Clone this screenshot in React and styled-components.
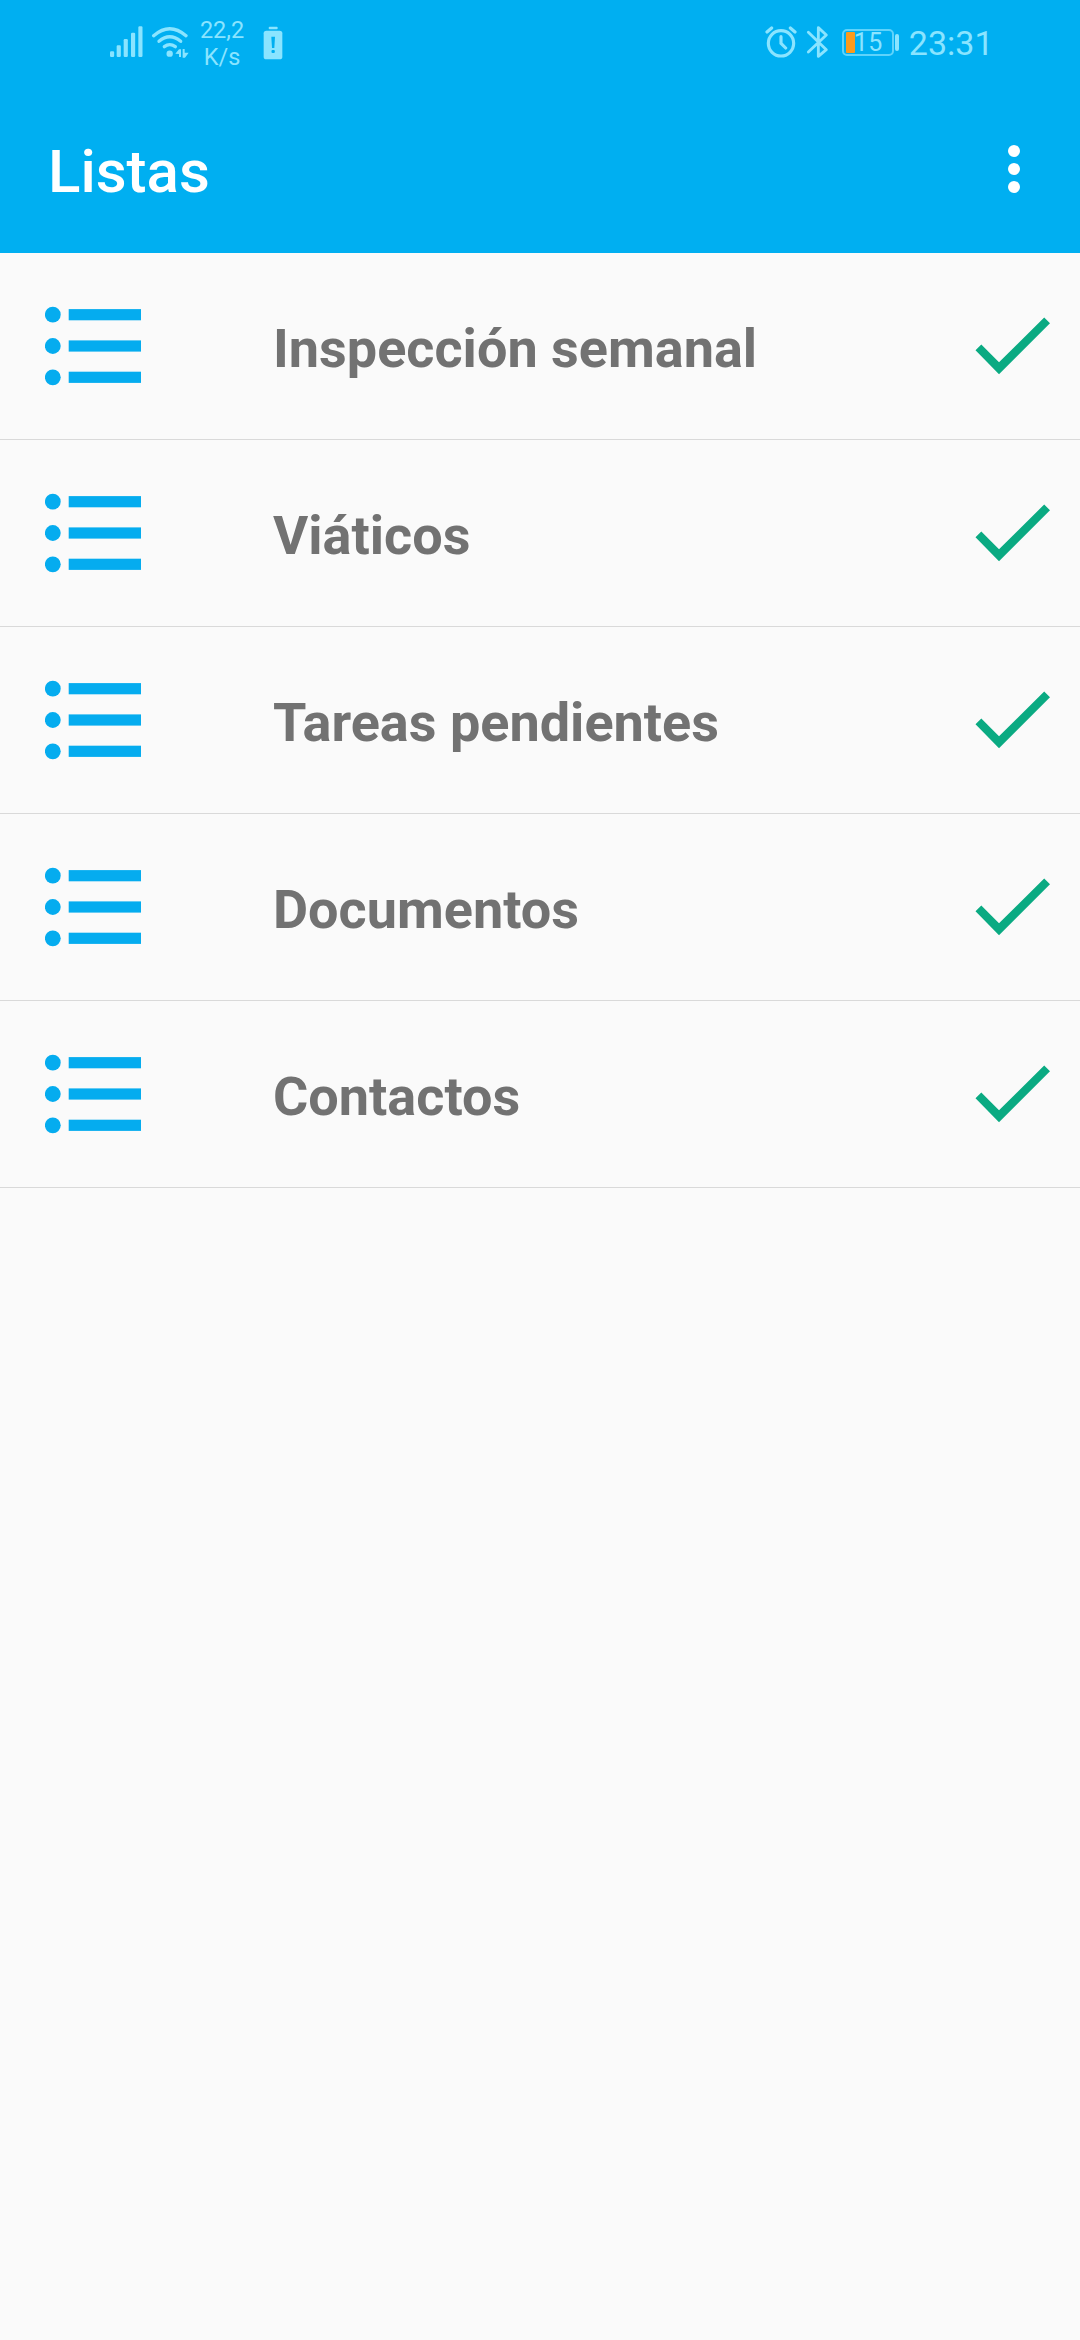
import React from "react";
import styled, { createGlobalStyle } from "styled-components";

const GlobalStyle = createGlobalStyle`
  * { box-sizing: border-box; }
  body { margin: 0; background: #fafafa; font-family: Roboto, "Noto Sans", sans-serif; }
`;

const TINT = "#8ae4ff";

const Screen = styled.main`
  width: 1080px;
  min-height: 2340px;
  background: #fafafa;
`;

const Header = styled.header`
  height: 253px;
  background: #00aff1;
`;

const StatusBar = styled.div`
  display: flex;
  justify-content: space-between;
  height: 85px;
  padding: 0 86.500px 0 109px;
  color: ${TINT};
`;

const StatusGroup = styled.div`
  display: flex;
  align-items: flex-start;
`;

const Glyph = styled.svg`
  display: block;
  flex: none;
  width: ${(p) => p.$w}px;
  height: ${(p) => p.$h}px;
  margin: ${(p) => p.$top || 0}px 0 0 ${(p) => p.$left || 0}px;
`;

const NetSpeed = styled.div`
  width: 50px;
  margin: 17px 0 0 8px;
  font-size: 23.5px;
  line-height: 27px;
  text-align: center;
`;

const Battery = styled.div`
  display: flex;
  align-items: center;
  margin: 29px 0 0 12.7px;
`;

const BatteryBody = styled.div`
  display: flex;
  align-items: center;
  width: 52px;
  height: 27px;
  padding-left: 2px;
  border: 2px solid #5fd3fb;
  border-radius: 5px;
  font-size: 25px;
  line-height: 25px;
`;

const BatteryLevel = styled.span`
  width: 9px;
  height: 21px;
  border-radius: 1px;
  background: #fc9a1c;
`;

const BatteryText = styled.span`
  margin-left: -1px;
  letter-spacing: 0.6px;
`;

const BatteryTip = styled.span`
  width: 4px;
  height: 17px;
  margin-left: 1.5px;
  border-radius: 2px;
  background: ${TINT};
`;

const Clock = styled.time`
  margin: 23px 0 0 9.7px;
  font-size: 34px;
  line-height: 40px;
`;

const AppBar = styled.div`
  display: flex;
  justify-content: space-between;
  align-items: flex-start;
  height: 168px;
  padding: 50px 60px 0 48px;
`;

const Title = styled.h1`
  margin: 0;
  color: #fff;
  font-size: 60px;
  font-weight: 500;
  line-height: 73px;
`;

const MenuButton = styled.button`
  display: flex;
  flex-direction: column;
  gap: 6px;
  margin: 10px 0 0;
  padding: 0;
  border: 0;
  background: none;
`;

const Dot = styled.span`
  width: 12px;
  height: 12px;
  border-radius: 50%;
  background: #fff;
`;

const List = styled.ul`
  margin: 0;
  padding: 0;
  list-style: none;
`;

const Row = styled.li`
  display: grid;
  grid-template-columns: 228px 1fr 75px;
  align-items: center;
  height: 187px;
  padding: 0 30px 0 45px;
  border-bottom: 1px solid #d9d9d9;
`;

const Label = styled.span`
  padding-top: 5px;
  color: #727272;
  font-size: 54px;
  font-weight: 700;
  line-height: 64px;
`;

const SignalIcon = () => (
  <Glyph $w={34} $h={32} $top={26} viewBox="27 48 102 96" fill={TINT}>
    {[[30, 124], [50, 106], [71, 87], [93, 68], [115, 49]].map(([x, y]) => (
      <rect key={x} x={x} y={y} width="12.5" height={141 - y} rx="3.5" />
    ))}
  </Glyph>
);

const WifiIcon = () => (
  <Glyph $w={38} $h={32} $top={26} $left={8} viewBox="153 48 114 96">
    <g fill="none" stroke={TINT} strokeWidth="10" strokeLinecap="round">
      <path d="M161 77Q209 35 258 77" />
      <path d="M177 94Q209 67 242 94" />
      <path d="M193 110Q209 98 226 110" />
    </g>
    <circle cx="209" cy="131" r="9.5" fill={TINT} />
    <path d="M226 131L237 118H243V141H237V132ZM266 128L255 143H248V117H254V128Z" fill={TINT} />
  </Glyph>
);

const BatteryAlertIcon = () => (
  <Glyph $w={20} $h={34} $top={26} $left={16} viewBox="489 48 60 102">
    <rect x="506" y="50" width="27" height="8" rx="3" fill={TINT} />
    <rect x="491" y="62" width="56" height="86" rx="8" fill={TINT} />
    <path d="M514 80H525L523 114H516Z" fill="#00aff1" />
    <rect x="514.500" y="120" width="10" height="9" rx="3" fill="#00aff1" />
  </Glyph>
);

const AlarmIcon = () => (
  <Glyph $w={32} $h={34} $top={25} viewBox="42 45 96 102">
    <g fill="none" stroke={TINT} strokeWidth="9.5" strokeLinecap="round">
      <circle cx="90" cy="100" r="38" />
      <path d="M90 80V100L104 114M48 66L62 54M118 54L132 66" />
    </g>
  </Glyph>
);

const BluetoothIcon = () => (
  <Glyph $w={23} $h={34} $top={25} $left={9.3} viewBox="166 45 69 102">
    <path
      d="M173 67L227 119L203 139V53L227 75L173 126"
      fill="none"
      stroke={TINT}
      strokeWidth="8.5"
      strokeLinecap="round"
      strokeLinejoin="round"
    />
  </Glyph>
);

const ListIcon = () => (
  <Glyph $w={97} $h={80} viewBox="0 0 97 80" fill="#05acef">
    {[8.7, 40, 71.3].map((y) => (
      <g key={y}>
        <circle cx="7.800" cy={y} r="7.900" />
        <rect x="23.700" y={y - 5.6} width="72.300" height="11.200" />
      </g>
    ))}
  </Glyph>
);

const CheckIcon = () => (
  <Glyph $w={75} $h={58} viewBox="975 317 75 58">
    <path d="M975.500 350.300L981.300 344.500L999 362.200L1044.200 317.500L1050 323.300L999 374.200Z" fill="#0aaa82" />
  </Glyph>
);

const items = ["Inspección semanal", "Viáticos", "Tareas pendientes", "Documentos", "Contactos"];

export default function App() {
  return (
    <Screen>
      <GlobalStyle />
      <Header>
        <StatusBar>
          <StatusGroup>
            <SignalIcon />
            <WifiIcon />
            <NetSpeed>
              22,2
              <br />
              K/s
            </NetSpeed>
            <BatteryAlertIcon />
          </StatusGroup>
          <StatusGroup>
            <AlarmIcon />
            <BluetoothIcon />
            <Battery>
              <BatteryBody>
                <BatteryLevel />
                <BatteryText>15</BatteryText>
              </BatteryBody>
              <BatteryTip />
            </Battery>
            <Clock>23:31</Clock>
          </StatusGroup>
        </StatusBar>
        <AppBar>
          <Title>Listas</Title>
          <MenuButton aria-label="Menú">
            <Dot />
            <Dot />
            <Dot />
          </MenuButton>
        </AppBar>
      </Header>
      <List>
        {items.map((name) => (
          <Row key={name}>
            <ListIcon />
            <Label>{name}</Label>
            <CheckIcon />
          </Row>
        ))}
      </List>
    </Screen>
  );
}
